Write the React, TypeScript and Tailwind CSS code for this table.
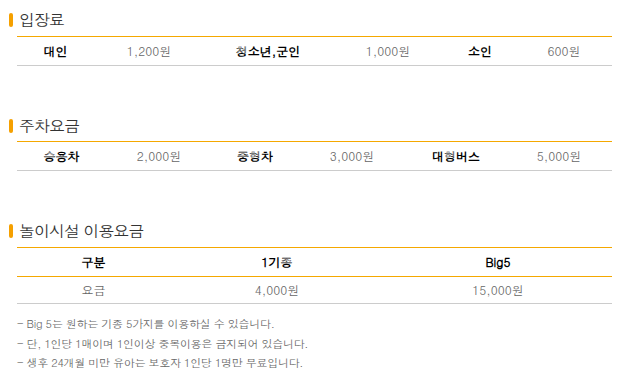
const FONT = "font-['Dotum','Noto_Sans_CJK_KR','Noto_Sans',sans-serif]";

const ADMISSION = [
  { label: "대인", price: "1,200원" },
  { label: "청소년,군인", price: "1,000원" },
  { label: "소인", price: "600원" },
];

const PARKING = [
  { label: "승용차", price: "2,000원" },
  { label: "중형차", price: "3,000원" },
  { label: "대형버스", price: "5,000원" },
];

const NOTES = [
  "- Big 5는 원하는 기종 5가지를 이용하실 수 있습니다.",
  "- 단, 1인당 1매이며 1인이상 중복이용은 금지되어 있습니다.",
  "- 생후 24개월 미만 유아는 보호자 1인당 1명만 무료입니다.",
];

function Heading({ children }: { children: string }) {
  return (
    <h2 className="flex items-center h-[19px] pl-[9px]">
      <span className="w-[4px] h-[14px] rounded-[2px] bg-[#f5a000]" />
      <span className="ml-[6px] text-[16px] leading-[19px] text-[#333] tracking-[-1px]">
        {children}
      </span>
    </h2>
  );
}

function PriceRow({
  items,
  cols,
}: {
  items: { label: string; price: string }[];
  cols: string;
}) {
  return (
    <div
      className={`grid ${cols} ml-[17px] w-[595px] h-[30px] border-t border-[#f5a800] border-b border-b-[#cccccc] items-center text-[12px] text-center`}
    >
      {items.map((it) => (
        <div className="contents" key={it.label}>
          <span className="font-bold text-black">{it.label}</span>
          <span className="text-[#666]">{it.price}</span>
        </div>
      ))}
    </div>
  );
}

export default function App() {
  return (
    <div className={`${FONT} w-[624px] h-[392px] bg-white pt-[10px]`}>
      {/* 입장료 */}
      <Heading>입장료</Heading>
      <div className="mt-[7px]">
        <PriceRow
          cols="grid-cols-[77px_110px_128px_112px_72px_96px]"
          items={ADMISSION}
        />
      </div>

      {/* 주차요금 */}
      <div className="mt-[50px]">
        <Heading>주차요금</Heading>
      </div>
      <div className="mt-[6px]">
        <PriceRow
          cols="grid-cols-[89px_106px_86px_108px_100px_106px]"
          items={PARKING}
        />
      </div>

      {/* 놀이시설 이용요금 */}
      <div className="mt-[50px]">
        <Heading>놀이시설 이용요금</Heading>
      </div>
      <div className="mt-[7px] ml-[17px] w-[595px] text-[12px] text-center">
        <div className="grid grid-cols-[153px_214px_228px] h-[30px] items-center border-t border-b border-[#f5a800] font-bold text-black">
          <span>구분</span>
          <span>1기종</span>
          <span>Big5</span>
        </div>
        <div className="grid grid-cols-[153px_214px_228px] h-[27px] items-center border-b border-[#cccccc] text-[#666]">
          <span>요금</span>
          <span>4,000원</span>
          <span>15,000원</span>
        </div>
      </div>

      <ul className="mt-[10px] ml-[17px] text-[11px] leading-[19.5px] text-[#666] tracking-[-0.3px]">
        {NOTES.map((n) => (
          <li key={n}>{n}</li>
        ))}
      </ul>
    </div>
  );
}
